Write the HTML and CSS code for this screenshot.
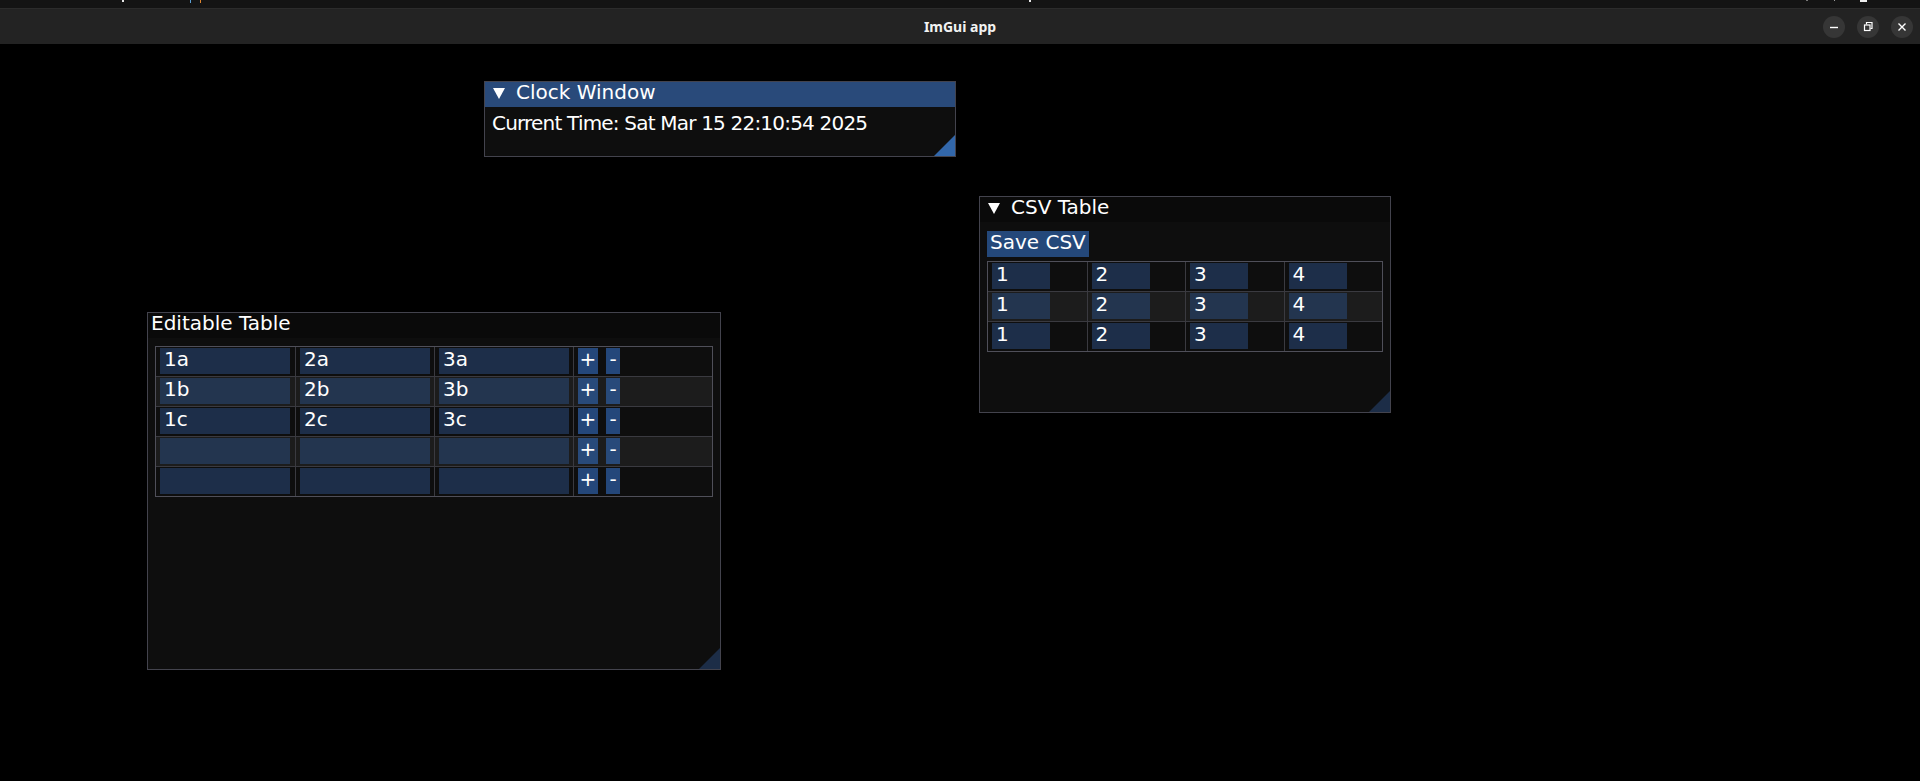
FILE: index.html
```html
<!DOCTYPE html>
<html>
<head>
<meta charset="utf-8">
<title>ImGui app</title>
<link rel="stylesheet" href="styles.css">
</head>
<body>
<div class="os-top">
  <span class="speck s1"></span>
  <span class="speck s2"></span>
  <span class="speck s3"></span>
  <span class="speck s4"></span>
  <span class="speck s5"></span>
  <span class="speck s6"></span>
  <span class="speck s7"></span>
</div>
<header class="titlebar">
  <div class="tb-left"></div>
  <div class="app-title">ImGui app</div>
  <div class="controls">
    <span class="ctl"><svg width="22" height="22" viewBox="0 0 22 22"><path d="M7 11.5H15" stroke="#fff" stroke-width="1.4"/></svg></span>
    <span class="ctl"><svg width="22" height="22" viewBox="0 0 22 22"><rect x="7.5" y="9" width="5.5" height="5.5" fill="none" stroke="#fff" stroke-width="1.2"/><path d="M9.5 8.5V6.5H15V12.5H13.5" fill="none" stroke="#fff" stroke-width="1.2"/></svg></span>
    <span class="ctl"><svg width="22" height="22" viewBox="0 0 22 22"><path d="M7.5 7.5L14.5 14.5M14.5 7.5L7.5 14.5" stroke="#fff" stroke-width="1.4"/></svg></span>
  </div>
</header>
<main class="desktop">
  <section class="win clock focused">
    <div class="win-title">
      <svg class="arrow" width="12" height="11" viewBox="0 0 12 11"><polygon points="0,0 12,0 6,11" fill="#fff"/></svg>
      <span class="title-text">Clock Window</span>
    </div>
    <div class="win-body">
      <div class="clock-text">Current Time: Sat Mar 15 22:10:54 2025</div>
    </div>
  </section>

  <section class="win csv">
    <div class="win-title">
      <svg class="arrow" width="12" height="11" viewBox="0 0 12 11"><polygon points="0,0 12,0 6,11" fill="#fff"/></svg>
      <span class="title-text">CSV Table</span>
    </div>
    <div class="win-body">
      <div class="btn">Save CSV</div>
      <div class="tbl">
        <div class="tr"><div class="td"><div class="inp">1</div></div><div class="td"><div class="inp">2</div></div><div class="td"><div class="inp">3</div></div><div class="td"><div class="inp">4</div></div></div>
        <div class="tr"><div class="td"><div class="inp">1</div></div><div class="td"><div class="inp">2</div></div><div class="td"><div class="inp">3</div></div><div class="td"><div class="inp">4</div></div></div>
        <div class="tr"><div class="td"><div class="inp">1</div></div><div class="td"><div class="inp">2</div></div><div class="td"><div class="inp">3</div></div><div class="td"><div class="inp">4</div></div></div>
      </div>
    </div>
  </section>

  <section class="win editable">
    <div class="win-title">
      <span class="title-text">Editable Table</span>
    </div>
    <div class="win-body">
      <div class="tbl">
        <div class="tr"><div class="td"><div class="inp">1a</div></div><div class="td"><div class="inp">2a</div></div><div class="td"><div class="inp">3a</div></div><div class="td"><div class="sb plus">+</div><div class="sb minus">-</div></div></div>
        <div class="tr"><div class="td"><div class="inp">1b</div></div><div class="td"><div class="inp">2b</div></div><div class="td"><div class="inp">3b</div></div><div class="td"><div class="sb plus">+</div><div class="sb minus">-</div></div></div>
        <div class="tr"><div class="td"><div class="inp">1c</div></div><div class="td"><div class="inp">2c</div></div><div class="td"><div class="inp">3c</div></div><div class="td"><div class="sb plus">+</div><div class="sb minus">-</div></div></div>
        <div class="tr"><div class="td"><div class="inp"></div></div><div class="td"><div class="inp"></div></div><div class="td"><div class="inp"></div></div><div class="td"><div class="sb plus">+</div><div class="sb minus">-</div></div></div>
        <div class="tr"><div class="td"><div class="inp"></div></div><div class="td"><div class="inp"></div></div><div class="td"><div class="inp"></div></div><div class="td"><div class="sb plus">+</div><div class="sb minus">-</div></div></div>
      </div>
    </div>
  </section>
</main>
</body>
</html>
```

FILE: styles.css
```css
* { box-sizing: border-box; }
html, body { margin: 0; padding: 0; background: #000; }
body {
  width: 1920px;
  height: 781px;
  overflow: hidden;
  font-family: "DejaVu Sans", sans-serif;
  color: #fff;
}

/* top system strip */
.os-top { height: 8px; background: #141414; position: relative; }
.speck { position: absolute; top: 0; height: 2px; }
.s1 { left: 122px; width: 2px; background: #e6e6e6; }
.s2 { left: 190px; width: 1px; height: 3px; background: #5aa0d6; }
.s3 { left: 200px; width: 1px; height: 3px; background: #e0842c; }
.s4 { left: 1029px; width: 2px; background: #e6e6e6; }
.s5 { left: 1806px; width: 2px; height: 1px; background: #777; }
.s6 { left: 1834px; width: 1px; height: 1px; background: #999; }
.s7 { left: 1860px; width: 7px; height: 2px; background: #eee; }

/* window title bar */
.titlebar {
  height: 36px;
  background: #232323;
  border-top: 1px solid #2c2c2c;
  display: grid;
  grid-template-columns: 1fr auto 1fr;
  align-items: center;
}
.app-title {
  font-family: "Noto Sans", sans-serif;
  font-weight: 700;
  font-size: 14px;
  color: #f2f2f2;
  padding-bottom: 1px;
}
.controls {
  justify-self: end;
  display: flex;
  gap: 12px;
  padding-right: 7px;
}
.ctl {
  width: 22px;
  height: 22px;
  border-radius: 50%;
  background: #363636;
  display: block;
}
.ctl svg { display: block; }

/* desktop with imgui windows */
.desktop { position: relative; height: 737px; background: #000; }

.win {
  position: absolute;
  border: 1px solid #43434d;
  background: #0e0e0e;
  display: flex;
  flex-direction: column;
  font-size: 20px;
}
.win::after {
  content: "";
  position: absolute;
  right: 0;
  bottom: 0;
  width: 21px;
  height: 21px;
  background: #1c2d47;
  clip-path: polygon(100% 0, 100% 100%, 0 100%);
}
.win.focused::after { background: #3267aa; }

.clock { left: 484px; top: 37px; width: 472px; height: 76px; }
.csv { left: 979px; top: 152px; width: 412px; height: 217px; }
.editable { left: 147px; top: 268px; width: 574px; height: 358px; }

.win-title {
  height: 25px;
  flex: none;
  display: flex;
  align-items: flex-start;
  background: #0a0a0a;
  line-height: 20px;
}
.focused .win-title { background: #294a7a; }
.arrow { flex: none; margin: 6px 11px 0 8px; display: block; }
.editable .win-title { padding-left: 3px; }

.win-body { padding: 8px 7px; }
.clock .win-body { padding: 6px 7px; }
.clock-text { line-height: 20px; letter-spacing: -0.8px; white-space: nowrap; }

.btn {
  display: inline-block;
  height: 26px;
  line-height: 22px;
  padding: 0 3px;
  background: #24487a;
}

.tbl { margin-top: 4px; border: 1px solid #4f4f59; }
.editable .tbl { margin-top: 0; }
.tr {
  display: grid;
  grid-template-columns: repeat(4, 1fr);
  height: 30px;
  border-top: 1px solid #3a3a40;
}
.tr:first-child { border-top: none; height: 29px; }
.tr:nth-child(even) { background: #1c1c1c; }
.td {
  display: flex;
  gap: 8px;
  padding: 1px 4px 2px;
  border-left: 1px solid #3a3a40;
  min-width: 0;
}
.td:first-child { border-left: none; }
.inp {
  height: 26px;
  width: 130px;
  line-height: 22px;
  padding: 0 4px;
  background: #1d2e49;
  white-space: nowrap;
}
.csv .inp { width: 58px; }
.tr:nth-child(even) .inp { background: #23354f; }
.sb {
  height: 26px;
  line-height: 22px;
  text-align: center;
  background: #24477a;
}
.sb.plus { width: 20px; }
.sb.minus { width: 14px; }
.tr:nth-child(even) .sb { background: #284a7a; }
```
